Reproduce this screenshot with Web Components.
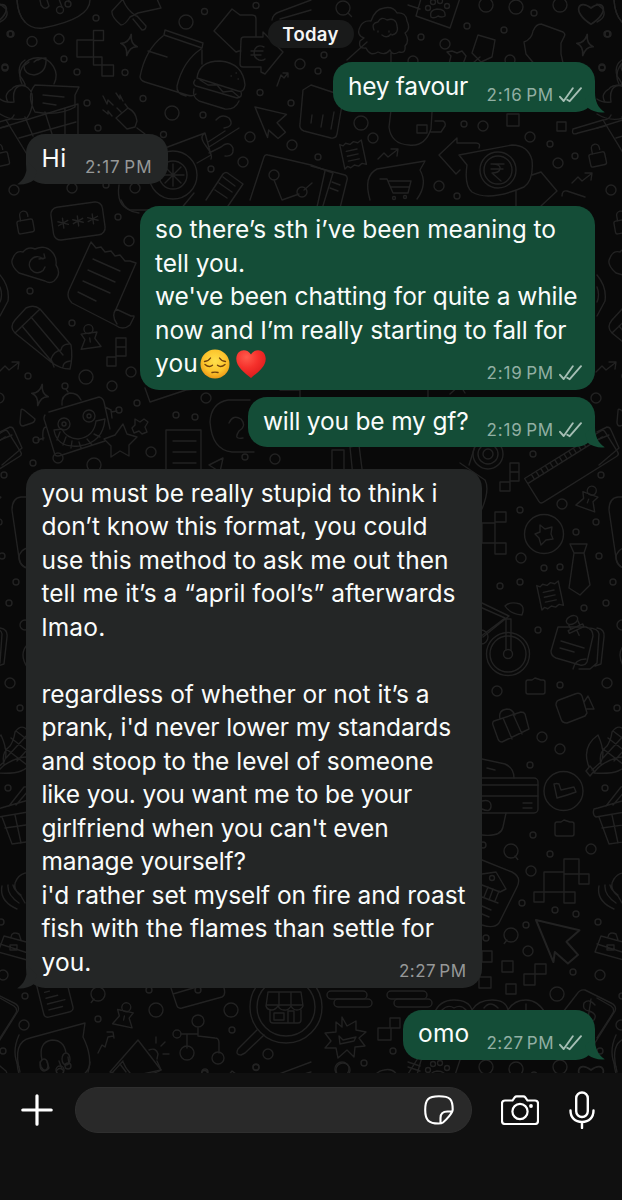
<!DOCTYPE html>
<html lang="en">
<head>
<meta charset="utf-8">
<meta name="viewport" content="width=device-width, initial-scale=1">
<title>Chat</title>
<style>
  body {
    margin: 0;
    background: #090909;
    font-family: Inter, "Liberation Sans", sans-serif;
  }
</style>
</head>
<body>
<chat-screen>
  <chat-date>Today</chat-date>
  <chat-message side="out" width="262" time="2:16 PM" gap="14" tail><chat-line width="120">hey favour</chat-line></chat-message>
  <chat-message side="in" width="142" time="2:17 PM" gap="22" tail><chat-line width="25">Hi</chat-line></chat-message>
  <chat-message side="out" width="455" time="2:19 PM" gap="21.5">
    <chat-line width="401">so there’s sth i’ve been meaning to</chat-line>
    <chat-line width="90">tell you.</chat-line>
    <chat-line width="422.5">we've been chatting for quite a while</chat-line>
    <chat-line width="411.5">now and I’m really starting to fall for</chat-line>
    <chat-line width="43">you<chat-emoji slot="after" name="pensive"></chat-emoji><chat-emoji slot="after" name="heart"></chat-emoji></chat-line>
  </chat-message>
  <chat-message side="out" width="347" time="2:19 PM" gap="7.5" tail><chat-line width="205.5">will you be my gf?</chat-line></chat-message>
  <chat-message side="in" width="456" time="2:27 PM" gap="22" tail>
    <chat-line width="396">you must be really stupid to think i</chat-line>
    <chat-line width="386">don’t know this format, you could</chat-line>
    <chat-line width="407">use this method to ask me out then</chat-line>
    <chat-line width="414">tell me it’s a “april fool’s” afterwards</chat-line>
    <chat-line width="64">lmao.</chat-line>
    <chat-line></chat-line>
    <chat-line width="388">regardless of whether or not it’s a</chat-line>
    <chat-line width="409.5">prank, i'd never lower my standards</chat-line>
    <chat-line width="392">and stoop to the level of someone</chat-line>
    <chat-line width="370.5">like you. you want me to be your</chat-line>
    <chat-line width="347">girlfriend when you can't even</chat-line>
    <chat-line width="204.5">manage yourself?</chat-line>
    <chat-line width="424">i'd rather set myself on fire and roast</chat-line>
    <chat-line width="392.5">fish with the flames than settle for</chat-line>
    <chat-line width="50">you.</chat-line>
  </chat-message>
  <chat-message side="out" width="192" time="2:27 PM" gap="21.5" tail><chat-line width="51.5">omo</chat-line></chat-message>
  <chat-composer slot="footer"></chat-composer>
</chat-screen>

<script>
const svg = (w, h, body, extra = "") =>
  `<svg width="${w}" height="${h}" viewBox="0 0 ${w} ${h}" fill="none" ${extra}>${body}</svg>`;

// One tile of the wallpaper. It repeats every TILE_W x TILE_H pixels.
const TILE_W = 597;
const TILE_H = 1062;

// x, y, radius of the loose bubbles
const DOTS = [
  [11,34,3],[32,41.5,5],[59,39,5],[96,18,3],[64,59,3],[5,68,3],[77,72,3],[125,72.5,3],[87,103,3],[143,98.5,3],
  [186,22,7],[204.5,11.5,3],[256,5.5,3],[172,113,7],[203,115,3],[98,128,3],[163.5,134.5,3],[250,137,5],[300,64,5],
  [260,92.5,3],[291,103,3],[292,145,5],[243,162,5],[211,169,3],[14,190,5],[72,188,5],[106,185,3],[135,188,5],
  [421,37,3],[445,44,5],[467,26,3],[504,30,3],[516,7,7],[534,13,3],[560,5,7],[486,5,7],[607,34,3],[602,67,3],
  [324,55,3],[318,71,3],[361,123,7],[373,138,5],[318,157,3],[464,124,3],[483,126,5],[530,137,5],[550,144,3],
  [575,156,3],[558,163,5],[439,186,5],[457,196,3],[413,61,5],[510,60,5],
  [118,217,3],[129,241,5],[30,291,3],[72,323,3],[28,376,3],[86,377,7],[112,386,5],[131,372,5],[137,403,3],
  [151,452,5],[176,415,3],[195,417,3],[206,398,5],[33,463,3],[94,465,7],[58,458,5],[245,457,3],[275,459,5],
  [533,454,3],[601,475,3],[562,504,5],[520,510,3],[596,522,3],[576,532,3],[521,558,5],[544,568,3],[560,567,3],
  [599,556,3],[500,586,3],[520,582,3],[613,582,3],[606,603,3],[584,608,3],[538,630,3],[560,685,3],[607,683,5],
  [497,691,5],[617,708,3],[542,737,5],[560,749,5],[530,765,3],[605,788,3],[533,835,3],[591,849,5],[550,854,3],
  [531,871,5],[522,903,3],[555,910,3],[576,914,3],[598,922,3],[526,925,3],[528,951,5],[573,972,3],[600,975,5],
  [557,994,7],[486,938,3],[483,845,3],[596,398,5],[25,996,3],[24,1025,5],[3,1051,3],[98,1019,3],[156,1010,7],
  [231,1010,7],[232,1030,3],[268,1054,5],[256,1067,3],[205,1072,3],[149,990,3],[198,990,3],[393,1051,3],
  [364,1063,3],[342,1069,7]
];

const lock = (x, y, r) => `<g transform="translate(${x} ${y}) rotate(${r})"><rect x="-8" y="-3" width="16" height="13" rx="2"/><path d="M-4-3v-5a4 4 0 0 1 8 0v2"/></g>`;
const sparkle = (x, y, r = 12) => `<path transform="translate(${x} ${y}) scale(${r / 10}) rotate(12)" d="M0-9Q1-1 7 0Q1 1 0 9Q-1 1-7 0Q-1-1 0-9z"/>`;
const pin = (x, y, r) => `<g transform="translate(${x} ${y}) rotate(${r})"><path d="M-8-7H8L5-1l5 9H-10L-5-1zM0-2v4"/><circle cy="-11" r="4.5"/></g>`;
const trend = (x, y) => `<path d="M${x - 10} ${y + 5}l6-6 4 4 9-7m-6-1l7 0-1 7"/>`;
const receipt = (x, y, r) => `<path transform="translate(${x} ${y}) rotate(${r})" d="M-11-12l3 2 3-2 4 2 4-2 4 2 4-2V13l-4-2-4 2-4-2-4 2-3-2-3 2zM-6-4H5M-6 1H5M-6 6H5"/>`;
const pointer = (x, y, s) => `<path transform="translate(${x} ${y}) scale(${s})" d="M0 0L30 7L21 15L29 24L22 30L13 22L12 29z"/>`;
const lens = (x, y, dx, dy) => `<circle cx="${x}" cy="${y}" r="7"/><path d="M${x + dx} ${y + dy}l${dx * .7} ${dy * .7}"/>`;
const folder = (x, y) => `<path d="M${x - 9} ${y - 5}q0-2 2-2h4l3-2 6 2h2q2 0 2 2v10q0 2-2 2h-15q-2 0-2-2z"/>`;
const heart = (x, y, s) => `<path transform="translate(${x} ${y}) scale(${s})" d="M0 9C-16-1-10-12 0-4C10-12 16-1 0 9z"/>`;

const DOODLES = [
  DOTS.map(([x, y, r]) => `<circle cx="${x}" cy="${y}" r="${r}"/>`).join(""),
  // pouch with notes, brush, blocks
  `<path d="M17 0C18 19 28 30 43 28C69 23 90 14 90 0M40 0l1 5q4 6 8 1l-2-6M62 7l-3-8M69 2l-1-7"/><circle cx="60" cy="10" r="3.5"/><circle cx="68" cy="4" r="3"/>`,
  `<path d="M123-1l-11 12q-1 6 9 14q4 0 9-8l8-4 23-5-4-9M123 0q4 10 13 16m-3 3l9 11q4 0 4-4l-9-10M0 22q10-5 6-13L0 4"/>`,
  `<path d="M77 40h16.500v17H77zM93.500 30.500h10v10h-10zM93.500 57h8.500v8h-8.500zM102 65h11.500v11H102z"/>`,
  sparkle(129, 45), sparkle(585, 45), sparkle(40, 395),
  // smiley behind the full basket
  `<path d="M22 84a18 18 0 1 1 32 0M24 66q0 8 10 9q13-2 12-17q-8 0-12 4m-9 3l4-3m9-2l4-2"/>`,
  `<path d="M0 99q5 4 14 3q-2-13 5-16q9-2 13 8q2 15-5 24q-14 4-27-4M35 85l44 2-4 8v12q-15 9-40 5q-9-17 0-27zM43 95l21 2m-21 6l13 2"/>`,
  `<path d="M0 128l78-24v30M6 120l22 36M19 138l57-16M25 117l8 19M45 112l7 22M65 108v26"/>`,
  // crisp bag and burger
  `<path d="M165 30l38 13-1 5-38-13zM163 36Q145 50 140 77q1 4 5 5l42 13q6 2 9-1M201 49q-18 12-24 37-1 8 9 10M202 50v14M148 51l19 6"/>`,
  `<path d="M197 78q2-17 23-17q23 2 25 24-1 8-7 6zM195 80q-3 4 1 6l41 12q6-1 4-6M194 89q-2 8 5 12l26 8q10 1 14-8M200 80l8 5 9 0 6 7 9-1 7 6M231 76h.5M236 73h.5M238 79h.5"/>`,
  // exchange arrows
  `<path d="M241 51l-2 0-3 1-22-21L232 9l8 6h12q4 0 4 4v17M241 40q0-3 3-3h19v-5l20 20-18 22-4-2v-5h-18q-3 0-3-3zM264 47q-6-3-9 2-3 8 4 11 4 1 6-1m-14-8h12m-12 4h10"/>`,
  // plug
  `<path d="M116 118l12-10q8 4 9 13l-2 6-8 2zM121 112l-4-4m11 0l-3-4M137 128l8 6M103 96l4 8 1-4 5 5M116 93l4 6 0-4 3 6M103 110l5 4 0-3 4 5M277 86l4-11 3 3 4-5m-5 0h5v4"/>`,
  pointer(255, 107, 1.05),
  // horn and breeze
  `<path d="M165 148l40-15 6 22-14 8M204 134q-5 3 2 12t5 13M208 142l17-11m-16 16l30-19m-30 25l12-6q8-7 12 1 1 9-8 8M216 120q6-7 13-2 6 8-5 10"/><circle cx="173" cy="175" r="24"/><circle cx="173" cy="175" r="14"/><path d="M173 164v22M162 175h22M165 167l16 16m0-16l-16 16M119 185q-3 20 11 25h50l14-17M206 200l17-26q3-3 6 0l14 10-15 22M219 183l13 9m-9-15l12 9m-20 4l12 8"/>`,
  // network card
  `<path d="M250 200l14-43q1-3 4-2l43 10 22 8-11 36M274 180l8 20 17-6M304 190l8-7M303 90l8-5 30 10q3 1 2 4l-6 35q-1 5-6 4l-27-7q-5-2-4-7zM321 127l2-12m8 14l3-17m-23 11l1-8"/><circle cx="274" cy="175" r="5"/><circle cx="302" cy="192" r="5"/>`,
  // poodle
  `<path d="M364 38q-8-3-4-11 3-7 11-6 4-12 13-13 9-2 13 5 9-1 10 8 4 8-2 12 5 8 0 13 1 8-6 6-7 4-9-2-5 6-12 2-8 5-12-4-8 1-6-7zM374 30q-3-7 4-8 3-6 9-2 9-3 10 6 2 7-5 9M378 31v1m11-1v1m-7 3q5 4 9-1M367 42l-20 18m44-7v10M272 20q1-6 7-8l32-12M280 19l31-9"/>`,
  // paw card
  `<path d="M422-5l-6 21 34 12 11-33M408 5l12 4M431 17q-2-7 6-8 9 0 8 7-3 2-7 0-4 3-7 1z"/><circle cx="428" cy="8" r="2.500"/><circle cx="433" cy="2" r="2.500"/><circle cx="440" cy="1" r="2.500"/><circle cx="447" cy="6" r="2.500"/>`,
  heart(591, 13, 1.25), lens(343, 8, 5, 5), lens(98, 994, -4, 5),
  `<path d="M478 35l17 5-3 17-11 5-9-9zM447 52l4 4-2 8h14l3-8-4-5-5 2-5-2zM480 57l-7 6M541 24l22 8q3 2 1 5l-3 6v11l2 9M541 24q-5 0-8 7-1 8-9 11l2 12 10 12M614 0q1 15 8 22M622 60q-8 5-5 16 6 8 5 10M605 102q-5-8 4-13 2-4 13-4"/>`,
  // under the first message
  `<path d="M391 110l-2 17q2 17 20 18 16 2 22-16l1-17M417 125h10v8h-10zM435 121h8q3 1 2 5l-4 6h-10M507 114h12v12h-12zM557 122h9v9h-9z"/>`,
  receipt(353, 154, -12), trend(388, 154), trend(582, 178), trend(606, 367), trend(470, 707),
  `<path d="M370 200q-7-24 7-31l48-8-5 9q8 14-3 29M380 179h7l6 14h15l3-12-22 0M391 187h18"/><circle cx="394" cy="198" r="1.500"/><circle cx="405" cy="197" r="1.500"/>`,
  // rupee bubble
  `<path d="M459 155l53-10q16 0 20 15 2 20-8 27-35 15-52 5-8-7-5-27zM479 148q2-5-3-5h-19v-5l-18 17 17 19 4-4M532 175l9-3 16 19-16 15M516 191v20M491 164h13m-13 5h12m-11-5q9 0 8 5-1 4-8 4l9 8"/><circle cx="498" cy="170" r="18"/><circle cx="498" cy="170" r="14"/>`,
  `<path d="M311 166l34 9q3 1 2 5l-7 28M325 171l-8 36M332 182l8 3m-10 3l8 3M573 129l30-9q6 0 8-5m-33 18l27-7M573 129q-2 7 5 4M562 196q0-6 5-5l18 6"/>`,
  lock(25, 223, -10), lock(597, 156, -12),
  // password card
  `<g transform="translate(78 221) rotate(-8)"><rect x="-26" y="-16.500" width="52" height="33" rx="7"/>${[-15, 0, 15].map(x => `<path d="M${x}-5v10m-5-7l10 4m0-4l-10 4"/>`).join("")}</g>`,
  // cloud with a refresh arrow
  `<path d="M19 273q-10-9-6-15 3-8 10-6 5-6 12-3 11-5 18 4 4 5 3 12 6 9-2 16-4 3-9 0zM43 259a8 8 0 1 0 2 8m-6-8l6-1-1-4"/>`,
  // torn bill
  `<path d="M91 242l5 6 5-1 4 5 6-1 4 5 5-1 5 6 5 0 6 2L116 309l15 7 3 0 0 1-4 8q-7 6-15 0L72 303q-6-6-3-13zM116 309q-5 7 1 15M93 259l27 12m-32-1l27 12m-32-1l27 12m-32-1l18 9"/>`,
  // pencil
  `<path d="M15 333q-6-6 0-13l11-12q8-4 14 1l31 36q2 12-1 24-10 0-19-7zM15 333l25-24M22 326l31 37M31 317l32 38M54 367l-3-8q3-8 10-9 1-6 8-6M63 367q0-5 7-6"/>`,
  pin(90, 340, -8), pin(588, 501, 20), pin(124, 1018, 12),
  `<path d="M116 338h10v9h-10zM116 347h10v9h-10zM107 357h9v9h-9zM21 411q0-3 3-1l11 9q0 3-3 4l-9 3q-3 0-3-4zM135 419l5 3 4-3 4 3-3 5 2 5-5 2-3-3-5 2-2-5 3-3z"/>`,
  // robot
  `<path d="M49 412l50-15q4 1 5 5l6 27M45 415q-2 3 0 7l10 33q2 2 7 0l43-14M62 405q-1-10 8-12 8 0 11 7M68 392l-2-3M54 430q3 18 25 16 24-3 26-27l-9 2q-2 16-18 18-12-1-16-10zM60 432l-3 8m9-3l-3 8m9-4l-1 7m8-6l2 6m6-9l5 6m2-11l6 3M105 407l6 3 1 8M111 412l6-1M46 427q-4 0-3 13M44 438l-6 2"/><circle cx="65" cy="386" r="3"/><circle cx="119" cy="410" r="3"/><circle cx="36" cy="440" r="3"/><circle cx="64" cy="424" r="6"/><circle cx="64" cy="424" r="2"/><circle cx="89" cy="416" r="6"/><circle cx="89" cy="416" r="2"/><path d="M123 424l4 10 10 3-8 8v11l-9-5-9 6 0-11-7-7 11-4z"/>`,
  `<path d="M0 432l10-5q3 0 4 3l8 18-20 17M0 440l12-5M166 430h35v50h-35zM173 441h23m-23 11h23m-23 11h23M250 400h-22q-17 3-18 22 2 28 22 30h22M229 423q4-9 12-4 6 7-2 12-6 9 4 7M209 465l14-7-3 14z"/>`,
  `<path d="M0 275q10 12 8 26L0 316M0 287q3 8 0 15M121 200q5 12 18 13M145 388l5 14 36-12 54-6M280 390h20v8M332 450v25h12v-25zM350 447l3 30h10l-4-32zM450 394l10-9 5 8M428 390v12"/>`,
  // ruler
  `<path transform="translate(571 466) rotate(-32)" d="M-46-14h90q3 0 3 3v24q0 3-3 3h-87q-3 0-3-3zM-46-8h88${Array.from({length: 14}, (_, i) => `M${-38 + i * 5.500}-14v5`).join("")}"/>`,
  // camera eye, blocks
  `<circle cx="488" cy="454" r="15"/><circle cx="488" cy="454" r="10"/><circle cx="488" cy="454" r="5"/><path d="M510 463h9v18h-9zM510 472h9M500 482h10v9h-10zM482 523h13v20h-13zM495 512h11v10h-11zM495 543h11v11h-11zM460 463l25 17q5 9-3 29M477 440l-8 25"/>`,
  // badge, tie, notes
  `<circle cx="544" cy="534" r="19.500"/><path d="M540 525l5 4 7-2-1 7 2 5-7 1-5 5-2-7-4-4 5-2zM570 544h17l-3 9h-10zM574 553l-5 35 11 7 10-10-6-32"/>`,
  receipt(550, 595, -12),
  `<path d="M558 627h28q7 2 7 9l-6 26q-2 4-7 3l-24-7q-5-2-5-7zM588 628q10 0 11 6l-2 29-7 6-11 0M597 628q8 1 7 9l-3 27-6 2M561 641l23 7m-24 0l14 4M573 669q2-10 13-10"/><g transform="translate(572 620) rotate(-25)"><ellipse rx="6" ry="4"/><path d="M-5 3v5h10V3M-8 8h16v3H-8zM0 11v6"/></g>`,
  `<path d="M609 510q0-12 9-13l9 0M609 510l7 48q2 9 8 10l7 0"/><circle cx="626" cy="558" r="10"/><circle cx="622" cy="625" r="5"/><path d="M624 645q-8 9 0 22"/>`,
  // bicycle
  `<circle cx="508" cy="654" r="21.500"/><circle cx="508" cy="654" r="18"/><circle cx="508" cy="654" r="4.500"/><path d="M506 650v-31h5v31M482 603l27 13-26 21M480 607l25 11-25 19M505 606q5-5 15-2 5 3 2 11-12-1-17-9z"/><circle cx="481" cy="637" r="7"/>`,
  folder(535, 687), folder(564, 829),
  // suitcase, video, corn
  `<path d="M494 721l27-9q3 0 4 2l4 15-27 13q-3 0-4-3l-5-14q-1-3 1-4zM500 719q-2-9 7-10 5 0 8 6M503 718l9 21m1-25l9 20M556 705q0-4 3-5l16-6q5-2 7 2l5 17-2 3-18 7q-5 0-6-4zM584 702l4-6 6 13-7 0"/>`,
  `<path d="M590 766l4 5-4 5-4-5zM589 767q-8-20 9-32 8 18 3 27l-9 8M601 764q-3-11 6-18 4-6 5-14 5-7 10-4l14 13q4 20-18 30-7 3-24 2 6-10 22-15 8-2 17 0M602 748l22 17M608 738l23 18M613 731l21 16M603 758l23-25M614 761l20-22"/>`,
  // bank cards
  `<rect x="430" y="778" width="108" height="35" rx="4"/><path d="M430 785h108M430 796h108M523 803h9m-9 5h9M482 759l23 5q9 4 9 14M487 768l8 2M482 835q19 2 21-8l3-14M482 801q9-2 9 5t-9 3"/>`,
  `<circle cx="563.500" cy="791" r="19.500"/><path d="M554 784q3-1 5 0l2 6 13-3 2 5q-8 3-19 6z"/>`,
  // basket
  `<path d="M598 808l38-11 3 5-2 8-41 7q-4-2-2-8zM599 817l10 27 28-4M602 828l35-5M612 815l6 28M630 812l4 28M606 806l15-19q5-1 4 4l-12 14"/>`,
  lens(511, 851, 4, 5), lens(511, 935, -4, 5),
  `<path d="M544 872h20v20h-20zM564 859h15v15h-15zM579 874h10v10h-10zM564 892h11v11h-11zM534 892h10v10h-10z"/>`,
  // bank note and signal
  `<path d="M482 860l30 12q10 5 5 15l-18 36q-5 6-17 2M482 874l14-2 10 17-6 3-18-7M488 887l-4 10m9-8l-4 11m10-9l-4 10m-13-4l16 6M482 906l9 4m-9 4l7 3"/><circle cx="492" cy="878" r="2.500"/><path d="M599 886q-3 15 15 23M605 885q-1 10 11 18M610 885q1 5 8 10M622 903l-4-7q-10-8-4-17 6-9 18-5"/>`,
  pointer(536, 920, 1.45),
  `<path d="M482 951h10v11h-10zM502 961h11v11h-11zM535 964h11v10h-11zM524 974h11v11h-11zM479 977h12v11h-12zM506 984h10v10h-10zM601 936l26 7-3 17-29-8zM608 937q1-6 8-3l2 6M597 944l28 9M607 945h7v5h-7z"/>`,
  // clouds row and dollar tag
  `<path d="M434 1014q5-14 20-14t18 10M472 1010q6-10 20-10t16 10M508 1010q6-10 18-10t20 14M442 1010q6-6 12-2 7-4 12 2M484 1008q6-8 14 0M526 1004v8M585 990l26 13q6 3 4 8l-22 35q-3 4-8 0M585 990q-5-1-8 4l-14 18M595 1005q-6-7-11-2-2 7 5 8 9 3 5 9-6 4-12-2M591 999l-4 26"/>`,
  // stacks
  ...[347, 407].map(x => `<rect x="${x - 20}" y="991" width="40" height="8" rx="4"/><rect x="${x - 13}" y="999" width="38" height="8" rx="4"/><path d="M${x - 10} 984h38"/>`),
  // burst
  `<path d="M342 1017l5 9 9-5 0 9 10 2-7 6 6 8-10 1-1 10-7-7-9 8-2-10-11 0 6-7-6-8 11-1 0-10 6 5zM339 1036l4 4 13-3-2 4-14 3zM378 1028h13v12h-13zM390 1018h10v10h-10z"/>`,
  `<path d="M418 1058l-10 16M408 1062l12 4M616 1035q-8 18 0 32M0 998l14 8q4 3 2 7L0 1038"/>`,
  // calendar page, headset bubble
  `<g transform="translate(55 997) rotate(-14)"><rect x="-15" y="-20" width="30" height="38" rx="4"/><path d="M-9-7h5m-5 6H3m-12 6h18m-18 6H5"/></g>`,
  `<path d="M20 1072q-8-30 10-34l55-15-2 14q10 20 5 35M42 1060q-4-18 10-20 12 0 14 13"/><ellipse cx="44" cy="1065" rx="4" ry="6"/><ellipse cx="66" cy="1059" rx="4" ry="6"/><circle cx="60" cy="1070" r="4"/>`,
  `<path d="M98 1053l4-8 3 2 3-10 5-1m-6-4l6 0 1 6M110 1072l28-32 23 30q-5 4-35 8zM120 1064l6 8M149 1050q7-3 9 4l-1 5M156 1043v-6m5 9l4-4m-2 12h6"/>`,
  // card and tree graph
  `<path d="M171 988l6 18q1 3 5 2l40-11q4-2 2-9M173 994l27-8M198 1028v8l17 2q4 0 4 5v10M181 1034h17M187 1034v14"/><circle cx="198" cy="1021" r="6"/><circle cx="177" cy="1034" r="4"/><circle cx="187" cy="1053" r="7"/><circle cx="218" cy="1058" r="6"/>`,
  // shop under a lens
  `<circle cx="286" cy="1007" r="36"/><circle cx="286" cy="1007" r="29"/><path d="M257 1030l-19 19q-3 6 3 6l4-2 19-18M268 992h33l2 14q-2 4-6 4-4 0-6-4-3 5-7 4-4 0-6-4-3 4-6 4-5 0-6-4zM270 1010v10q0 3 3 3h25q3 0 3-3v-10M267 1005h36M279 992v14M291 992v14M288 1022v-11h6v12M274 1013h10v7h-10z"/>`
].join("");

class ChatWallpaper extends HTMLElement {
  constructor() {
    super();
    this.attachShadow({mode: "open"});
    this.shadowRoot.innerHTML = `
    <style>
      :host { display: block; overflow: hidden; background: #090909; }
      svg { display: block; }
    </style>
    ${svg(622, 1073, `<defs><g id="tile">${DOODLES}</g></defs>
      <use href="#tile"/><use href="#tile" x="${TILE_W}"/><use href="#tile" x="${-TILE_W}"/>
      <use href="#tile" y="${TILE_H}"/>`, `stroke="#222222" stroke-width="1.4" stroke-linejoin="round" stroke-linecap="round"`)}
    `;
  }
}

class ChatScreen extends HTMLElement {
  constructor() {
    super();
    this.attachShadow({mode: "open"});
    this.shadowRoot.innerHTML = `
    <style>
      :host {
        display: grid;
        grid-template-rows: 1073px 127px;
        width: 622px;
        height: 1200px;
        overflow: hidden;
      }
      chat-wallpaper, main { grid-area: 1 / 1; }
      main {
        position: relative;
        display: flex;
        flex-direction: column;
        box-sizing: border-box;
        padding: 20px 27px 0 26px;
      }
      ::slotted([slot="footer"]) { grid-area: 2 / 1; }
    </style>
    <chat-wallpaper></chat-wallpaper>
    <main><slot></slot></main>
    <slot name="footer"></slot>
    `;
  }
}

class ChatDate extends HTMLElement {
  constructor() {
    super();
    this.attachShadow({mode: "open"});
    this.shadowRoot.innerHTML = `
    <style>
      :host {
        display: block;
        align-self: center;
        width: 86px;
        height: 28px;
        border-radius: 14px;
        background: #191a1a;
        color: #f5f5f5;
        font-size: 18.500px;
        font-weight: 600;
        line-height: 29px;
        letter-spacing: .3px;
        text-align: center;
      }
    </style>
    <slot></slot>
    `;
  }
}

class ChatMessage extends HTMLElement {
  constructor() {
    super();
    this.attachShadow({mode: "open"});
  }

  connectedCallback() {
    const out = this.getAttribute("side") === "out";
    const ticks = svg(23, 16, `<path d="M1 9.800l3.700 4.200L13.800 1.200M8.300 12.800l2.400 1.400L22 1.200" stroke="currentColor" stroke-width="1.900" stroke-linecap="round" stroke-linejoin="round"/>`);
    const tail = svg(20, 24, `<path d="M10 0V3.500C10 12 13 19 19.800 23.300C13.500 24 8 22.500 3 19L0 10z" fill="currentColor"/>`, `class="tail"`);

    this.shadowRoot.innerHTML = `
    <style>
      :host {
        position: relative;
        display: grid;
        box-sizing: border-box;
        flex: none;
        align-self: ${out ? "flex-end" : "flex-start"};
        width: ${this.getAttribute("width")}px;
        margin-top: ${this.getAttribute("gap")}px;
        padding: 7.500px ${out ? 13.5 : 15.5}px 8px 15px;
        border-radius: 19px;
        background: ${out ? "#144d37" : "#242626"};
        color: #fafcfb;
      }
      .text, .meta { grid-area: 1 / 1; }
      .text { white-space: nowrap; padding: 0 0 1px ${out ? 0 : .5}px; }
      .meta {
        display: flex;
        align-items: center;
        place-self: end;
        gap: 4.500px;
        height: 18px;
        color: ${out ? "#91afa3" : "#969898"};
        line-height: 18px;
        word-spacing: -2px;
      }
      .meta svg { color: #a5beb4; }
      .meta chat-line { font-size: 17px; --line: 18px; }
      .tail {
        position: absolute;
        bottom: -.5px;
        ${out ? "right: -9.500px;" : "left: -9.500px; transform: scaleX(-1);"}
        color: ${out ? "#144d37" : "#242626"};
      }
    </style>
    ${this.hasAttribute("tail") ? tail : ""}
    <div class="text"><slot></slot></div>
    <div class="meta"><chat-line width="67.500">${this.getAttribute("time")}</chat-line>${out ? ticks : ""}</div>
    `;
  }
}

// A single line of text, tracked out or in to fill the width it is given.
class ChatLine extends HTMLElement {
  constructor() {
    super();
    this.attachShadow({mode: "open"});
    this.shadowRoot.innerHTML = `
    <style>
      :host {
        display: flex;
        height: var(--line, 33.500px);
        font-size: 24.500px;
        line-height: var(--line, 33.500px);
        white-space: nowrap;
      }
    </style>
    <span><slot></slot></span><slot name="after"></slot>
    `;
    this._span = this.shadowRoot.querySelector("span");
  }

  connectedCallback() {
    const target = parseFloat(this.getAttribute("width"));
    if (!target) return;
    const count = this.textContent.trim().length;
    const natural = this._span.getBoundingClientRect().width;
    this._span.style.letterSpacing = `${(target - natural) / count}px`;
  }
}

class ChatEmoji extends HTMLElement {
  constructor() {
    super();
    this.attachShadow({mode: "open"});
  }

  connectedCallback() {
    const pensive = svg(30, 30, `
      <defs><radialGradient id="face" cx=".5" cy=".4" r=".6"><stop offset="0" stop-color="#ffe04c"/><stop offset=".65" stop-color="#fcc42c"/><stop offset="1" stop-color="#ed9917"/></radialGradient></defs>
      <circle cx="15" cy="15" r="14.500" fill="url(#face)"/>
      <g stroke="#70420d" stroke-width="1.400" stroke-linecap="round">
        <path d="M5 15.500q4 3.500 7.500 .8M17.500 16.300q3.500 2.700 7.500-.8M4.500 12.500q4-.3 6-3.500M25.500 12.500q-4-.3-6-3.500M12 23.500q3-.8 6 0"/>
      </g>`);
    const heart = svg(30, 30, `
      <defs><radialGradient id="red" cx=".35" cy=".25" r=".8"><stop offset="0" stop-color="#ff5b4c"/><stop offset=".5" stop-color="#f5302b"/><stop offset="1" stop-color="#d91a1b"/></radialGradient></defs>
      <path d="M15 29C8.500 23.500 0 17.500 .3 9.500C.6 0 11-1.500 15 5.500C19-1.500 29.400 0 29.700 9.500C30 17.500 21.500 23.500 15 29z" fill="url(#red)"/>`);
    this.shadowRoot.innerHTML = `
    <style>
      :host { display: flex; align-items: center; margin: 0 5px 0 1.500px; }
    </style>
    ${this.getAttribute("name") === "heart" ? heart : pensive}
    `;
  }
}

class ChatComposer extends HTMLElement {
  constructor() {
    super();
    this.attachShadow({mode: "open"});
    this.shadowRoot.innerHTML = `
    <style>
      :host {
        display: flex;
        align-items: flex-start;
        box-sizing: border-box;
        padding: 14px 27px 0 21px;
        background: #101010;
        color: #fff;
      }
      .bar { display: flex; align-items: center; height: 46px; width: 100%; }
      .field {
        display: flex;
        align-items: center;
        justify-content: flex-end;
        box-sizing: border-box;
        width: 397px;
        height: 46.500px;
        margin: 0 29px 0 22px;
        padding-right: 17px;
        border: 1px solid #2f2f2f;
        border-radius: 24px;
        background: #292929;
      }
      .mic { margin-left: auto; }
      svg { display: block; flex: none; }
    </style>
    <div class="bar">
      ${svg(32, 32, `<path d="M16 1.800v28.400M1.800 16h28.400"/>`, `stroke="currentColor" stroke-width="3.200" stroke-linecap="round"`)}
      <div class="field">
        ${svg(30, 30, `<path d="M14.500 28.500C5 28.500 1.200 25.500 1.200 15S4 1.300 15 1.300S28.700 4 28.700 14.500C28.700 18 22 25 19 27.500C17.800 28.400 16.500 28.500 14.500 28.500zM28.500 16.500H23.500C18.500 16.500 16.500 19 16.500 23V28"/>`, `stroke="currentColor" stroke-width="2.100" stroke-linejoin="round"`)}
      </div>
      ${svg(38, 30, `<path d="M4 5.500h7.500l2.200-3.200q.7-1 2-1h6.600q1.300 0 2 1l2.200 3.200H34q3 0 3 3v17.500q0 3-3 3H4q-3 0-3-3V8.500q0-3 3-3z"/><circle cx="19" cy="16.500" r="7.600"/><circle cx="30" cy="11" r="1.900" fill="currentColor" stroke="none"/>`, `stroke="currentColor" stroke-width="2.200"`)}
      <div class="mic">${svg(26, 38, `<rect x="7.200" y="1.500" width="11.600" height="24.500" rx="5.800"/><path d="M1.500 19.500C1.500 26.500 6 31 13 31S24.500 26.500 24.500 19.500M13 31v6"/>`, `stroke="currentColor" stroke-width="2.400" stroke-linecap="round"`)}</div>
    </div>
    `;
  }
}

customElements.define("chat-wallpaper", ChatWallpaper);
customElements.define("chat-screen", ChatScreen);
customElements.define("chat-date", ChatDate);
customElements.define("chat-message", ChatMessage);
customElements.define("chat-line", ChatLine);
customElements.define("chat-emoji", ChatEmoji);
customElements.define("chat-composer", ChatComposer);
</script>
</body>
</html>
